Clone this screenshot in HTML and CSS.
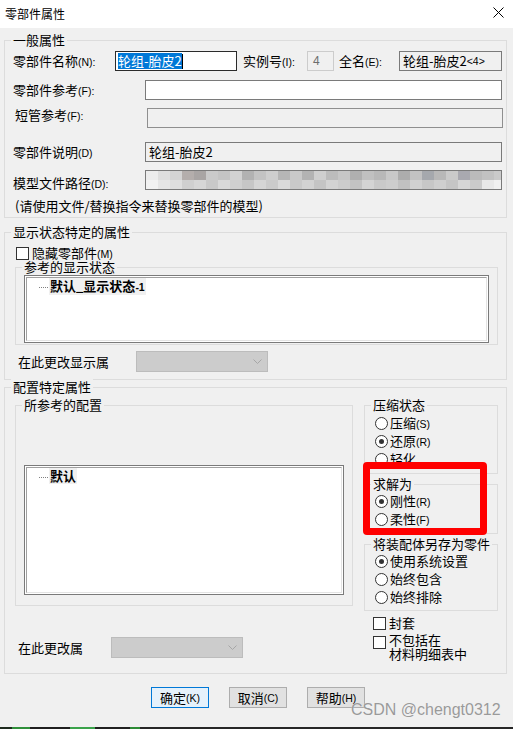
FILE: index.html
```html
<!DOCTYPE html>
<html lang="zh-CN">
<head>
<meta charset="utf-8">
<title>零部件属性</title>
<link rel="stylesheet" href="styles.css">
</head>
<body>
<div class="dialog">
  <div class="titlebar">
    <span class="title">零部件属性</span>
    <svg class="close" width="11" height="11" viewBox="0 0 11 11"><path d="M0.5 0.5L10.5 10.5M10.5 0.5L0.5 10.5" stroke="#000" stroke-width="1"/></svg>
  </div>

  <div class="group g1">
    <div class="legend">一般属性</div>
    <div class="row r1">
      <span class="lbl w-name">零部件名称<span class="k">(N):</span></span>
      <div class="box edit name"><span class="sel">轮组-胎皮2</span><span class="caret"></span></div>
      <span class="lbl w-inst">实例号<span class="k">(I):</span></span>
      <div class="box inst">4</div>
      <span class="lbl w-full">全名<span class="k">(E):</span></span>
      <div class="box ro full">轮组-胎皮2<span class="k">&lt;4&gt;</span></div>
    </div>
    <div class="row r2">
      <span class="lbl w-long">零部件参考<span class="k">(F):</span></span>
      <div class="box edit wide"></div>
    </div>
    <div class="row r3">
      <span class="lbl w-long up">短管参考<span class="k">(F):</span></span>
      <div class="box dis wide"></div>
    </div>
    <div class="row r4">
      <span class="lbl w-long">零部件说明<span class="k">(D)</span></span>
      <div class="box ro wide">轮组-胎皮2</div>
    </div>
    <div class="row r5">
      <span class="lbl w-long down">模型文件路径<span class="k">(D):</span></span>
      <div class="box edit wide mosaic"></div>
    </div>
    <div class="note">(请使用文件/替换指令来替换零部件的模型)</div>
  </div>

  <div class="group g2">
    <div class="legend">显示状态特定的属性</div>
    <div class="check c-hide"><i></i><span>隐藏零部件<span class="k">(M)</span></span></div>
    <div class="group sub-ds">
      <div class="legend">参考的显示状态</div>
      <div class="listbox lb-ds">
        <div class="lb-inner">
          <div class="item"><span class="dots"></span><span class="itxt">默认_显示状态<span class="k b">-1</span></span></div>
        </div>
      </div>
    </div>
    <div class="row combo-row">
      <span class="lbl w-cds">在此更改显示属</span>
      <div class="combo"><svg width="9" height="5" viewBox="0 0 9 5"><path d="M0.5 0.5L4.5 4.5L8.5 0.5" fill="none" stroke="#a6a6a6"/></svg></div>
    </div>
  </div>

  <div class="group g3">
    <div class="legend">配置特定属性</div>
    <div class="cols">
      <div class="col-left">
        <div class="group sub-cfg">
          <div class="legend">所参考的配置</div>
          <div class="listbox lb-cfg">
            <div class="lb-inner">
              <div class="item"><span class="dots"></span><span class="itxt">默认</span></div>
            </div>
          </div>
        </div>
        <div class="row combo-row2">
          <span class="lbl w-ccfg">在此更改属</span>
          <div class="combo"><svg width="9" height="5" viewBox="0 0 9 5"><path d="M0.5 0.5L4.5 4.5L8.5 0.5" fill="none" stroke="#a6a6a6"/></svg></div>
        </div>
      </div>
      <div class="col-right">
        <div class="group rg ga">
          <div class="legend">压缩状态</div>
          <div class="radios first">
            <div class="radio"><i></i><span>压缩<span class="k">(S)</span></span></div>
            <div class="radio on"><i></i><span>还原<span class="k">(R)</span></span></div>
            <div class="radio"><i></i><span>轻化</span></div>
          </div>
        </div>
        <div class="group rg gb">
          <div class="legend">求解为</div>
          <div class="radios">
            <div class="radio on"><i></i><span>刚性<span class="k">(R)</span></span></div>
            <div class="radio"><i></i><span>柔性<span class="k">(F)</span></span></div>
          </div>
        </div>
        <div class="group rg gc">
          <div class="legend">将装配体另存为零件</div>
          <div class="radios">
            <div class="radio on"><i></i><span>使用系统设置</span></div>
            <div class="radio"><i></i><span>始终包含</span></div>
            <div class="radio"><i></i><span>始终排除</span></div>
          </div>
        </div>
        <div class="check c-env"><i></i><span>封套</span></div>
        <div class="check c-bom"><i></i><span>不包括在<br>材料明细表中</span></div>
      </div>
    </div>
  </div>

  <div class="btns">
    <div class="btn default">确定<span class="k">(K)</span></div>
    <div class="btn">取消<span class="k">(C)</span></div>
    <div class="btn">帮助<span class="k">(H)</span></div>
  </div>

  <div class="strip"></div>

  <div class="highlight"></div>
  <div class="watermark">CSDN @chengt0312</div>
</div>
</body>
</html>
```

FILE: styles.css
```css
html, body {
  margin: 0;
  padding: 0;
}
body {
  background: #f0f0f0;
  font-family: "Noto Sans CJK SC", "Noto Sans", sans-serif;
  font-size: 13px;
  color: #000;
}
.dialog {
  position: relative;
  width: 513px;
  height: 729px;
  overflow: hidden;
  background: #f0f0f0;
  display: flex;
  flex-direction: column;
}
.titlebar {
  height: 28px;
  flex: none;
  background: #fff;
  display: flex;
  align-items: center;
  justify-content: space-between;
  padding: 0 9px 0 5px;
  box-sizing: border-box;
}
.title {
  font-size: 12px;
  line-height: 16px;
}
.close {
  display: block;
  margin-top: -3px;
}
.k {
  font-family: "Liberation Sans", Arial, sans-serif;
  font-size: 10.5px;
}
.k.b {
  font-weight: bold;
}

/* group boxes */
.group {
  border: 1px solid #dcdcdc;
  box-sizing: border-box;
  flex: none;
}
.legend {
  display: block;
  width: fit-content;
  margin: -9px 0 0 6px;
  padding: 0 2px;
  line-height: 16px;
  background: #f0f0f0;
  white-space: nowrap;
}
.g1 {
  margin: 12px 0 0 4px;
  width: 503px;
  padding-bottom: 3px;
}
.g2 {
  margin: 14px 0 0 4px;
  width: 503px;
  padding-bottom: 7px;
}
.g3 {
  margin: 7px 0 0 4px;
  width: 503px;
  height: 287px;
}

/* rows */
.row {
  display: flex;
  align-items: center;
  height: 20px;
}
.lbl {
  flex: none;
  line-height: 16px;
  white-space: nowrap;
}
.r1 { margin-top: 3px; }
.r2 { margin-top: 9px; }
.r3 { margin-top: 8px; align-items: flex-start; }
.r4 { margin-top: 14px; }
.r5 { margin-top: 8px; }
.w-name { margin-left: 8px; width: 102px; }
.w-inst { margin-left: 6px; width: 64px; }
.w-full { margin-left: 5px; width: 60px; }
.w-long { margin-left: 8px; width: 132px; }
.r3 .w-long { margin-left: 10px; }
.lbl.up { line-height: 14px; }
.lbl.down { padding-top: 6px; }

.box {
  height: 20px;
  box-sizing: border-box;
  border: 1px solid #7a7a7a;
  display: flex;
  align-items: center;
  padding-left: 3px;
  line-height: 16px;
  white-space: nowrap;
  flex: none;
}
.edit { background: #fff; }
.ro { background: #f0f0f0; }
.dis { background: #f0f0f0; border-color: #8f8f8f; }
.name {
  width: 122px;
  border-color: #2b2b2b;
  padding-left: 2px;
}
.sel {
  background: #0078d7;
  color: #fff;
  line-height: 16px;
}
.caret {
  width: 1px;
  height: 15px;
  background: #000;
}
.inst {
  width: 27px;
  border-color: #cccccc;
  background: #f0f0f0;
  color: #6d6d6d;
  padding-left: 5px;
  font-family: "Liberation Sans", Arial, sans-serif;
  font-size: 12px;
}
.full { width: 103px; }
.wide { width: 357px; }
.r3 .wide { width: 356px; }
.mosaic {
  background-color: #fff;
  background-repeat: no-repeat;
  background-size: 100% 50%, 100% 50%;
  background-position: 0 0, 0 100%;
  background-image:
    linear-gradient(90deg, #ececec 0 12px, #dedede 12px 24px, #d4d4d4 24px 36px, #b4aeac 36px 48px, #a9a5a4 48px 60px, #cacaca 60px 72px, #c4c4c4 72px 84px, #d2d2d2 84px 96px, #b2b2b2 96px 108px, #c3c3c3 108px 120px, #cecece 120px 132px, #b6b6b6 132px 144px, #c9c9c9 144px 156px, #b3b3b3 156px 168px, #cfcfcf 168px 180px, #bcbcbc 180px 192px, #c6c6c6 192px 204px, #afafaf 204px 216px, #c0c0c0 216px 228px, #b8b8b8 228px 240px, #c8c8c8 240px 252px, #adadad 252px 264px, #c2c2c2 264px 276px, #a5a8ad 276px 288px, #b8b8b8 288px 300px, #cacaca 300px 312px, #a9a9b0 312px 324px, #bbbbbb 324px 336px, #c2c2c2 336px 348px, #cacaca 348px 360px),
    linear-gradient(90deg, #f2f2f2 0 12px, #e6e6e6 12px 24px, #dedede 24px 36px, #cfcfcf 36px 48px, #d6d6d6 48px 60px, #c9c9c9 60px 72px, #d9d9d9 72px 84px, #cfcfcf 84px 96px, #c6c6c6 96px 108px, #d5d5d5 108px 120px, #cbcbcb 120px 132px, #dadada 132px 144px, #c9c9c9 144px 156px, #d2d2d2 156px 168px, #c4c4c4 168px 180px, #d3d3d3 180px 192px, #cccccc 192px 204px, #c3c3c3 204px 216px, #d4d4d4 216px 228px, #c9c9c9 228px 240px, #cdcdcd 240px 252px, #c1c1c1 252px 264px, #d1d1d1 264px 276px, #c7c7c7 276px 288px, #cfcfcf 288px 300px, #c5c5c5 300px 312px, #d6d6d6 312px 324px, #cbcbcb 324px 336px, #e8e8e8 336px 348px, #f0f0f0 348px 360px);
}
.note {
  margin: 8px 0 0 10px;
  line-height: 16px;
  white-space: nowrap;
}

/* checkbox */
.check {
  display: flex;
  align-items: center;
  line-height: 16px;
}
.check i {
  display: block;
  flex: none;
  width: 13px;
  height: 13px;
  box-sizing: border-box;
  border: 1px solid #333;
  background: #fff;
  margin-right: 3px;
}
.c-hide {
  margin: 5px 0 0 11px;
  height: 16px;
}

/* sub groups */
.sub-ds {
  margin: 6px 0 0 10px;
  width: 483px;
  padding-bottom: 1px;
}
.listbox {
  box-sizing: border-box;
  border: 1px solid #7a7a7a;
  background: #fff;
  padding: 1px;
}
.lb-inner {
  height: 100%;
  box-sizing: border-box;
  border-top: 1px solid #a0a0a0;
  border-left: 1px solid #a0a0a0;
  border-right: 1px solid #e3e3e3;
  border-bottom: 1px solid #e3e3e3;
}
.lb-ds {
  margin-left: 8px;
  width: 465px;
  height: 68px;
}
.item {
  display: flex;
  align-items: center;
  height: 16px;
}
.dots {
  width: 9px;
  margin-left: 12px;
  border-top: 1px dotted #808080;
  margin-top: 2px;
}
.itxt {
  margin-left: 1px;
  padding: 0 1px;
  background: #f0f0f0;
  font-weight: bold;
  line-height: 16px;
}
.combo-row {
  margin-top: 6px;
  height: 21px;
}
.w-cds {
  margin-left: 13px;
  width: 118px;
}
.combo {
  flex: none;
  width: 132px;
  height: 21px;
  box-sizing: border-box;
  background: #cccccc;
  border: 1px solid #bcbcbc;
  display: flex;
  align-items: center;
  justify-content: flex-end;
  padding-right: 5px;
}
.combo svg { display: block; }

/* config group */
.cols {
  display: flex;
  margin-top: 10px;
}
.col-left {
  margin-left: 10px;
  width: 338px;
  flex: none;
}
.sub-cfg {
  width: 338px;
  padding-bottom: 10px;
}
.lb-cfg {
  margin: 52px 0 0 8px;
  width: 320px;
  height: 130px;
}
.combo-row2 {
  margin-top: 31px;
  height: 21px;
}
.w-ccfg {
  margin-left: 3px;
  width: 93px;
}
.col-right {
  margin-left: 11px;
  width: 135px;
  flex: none;
}
.rg { width: 134px; }
.ga { height: 69px; }
.gb { height: 50px; margin-top: 10px; }
.gc { height: 67px; margin-top: 10px; }
.radios.first { margin-top: 1px; }
.radio {
  display: flex;
  align-items: center;
  height: 18px;
  margin-left: 10px;
  line-height: 16px;
  white-space: nowrap;
}
.radio i {
  flex: none;
  width: 13px;
  height: 13px;
  box-sizing: border-box;
  border: 1px solid #333;
  border-radius: 50%;
  background: #fff;
  margin-right: 2px;
  display: flex;
  align-items: center;
  justify-content: center;
}
.radio.on i::after {
  content: "";
  width: 5px;
  height: 5px;
  border-radius: 50%;
  background: #333;
}
.c-env {
  margin: 4px 0 0 9px;
  height: 16px;
}
.c-bom {
  margin: 2px 0 0 9px;
  align-items: flex-start;
  line-height: 14px;
}
.c-bom i { margin-top: 3px; }

/* buttons */
.btns {
  display: flex;
  gap: 20px;
  margin-top: 13px;
  padding-left: 151px;
  flex: none;
}
.btn {
  width: 58px;
  height: 21px;
  box-sizing: border-box;
  border: 1px solid #adadad;
  background: #e1e1e1;
  display: flex;
  align-items: center;
  justify-content: center;
  line-height: 16px;
}
.btn.default {
  border-color: #0078d7;
  background: #e5f1fb;
}

.strip {
  margin-top: auto;
  height: 2px;
  flex: none;
  background: linear-gradient(90deg, #1e2a1e 0 12px, #2f8f3a 12px 30px, #1f1f1f 30px 70px, #3aa24a 70px 95px, #202020 95px 130px, #2d8a35 130px 140px, #262626 140px 513px);
}

/* overlays */
.highlight {
  position: absolute;
  left: 363px;
  top: 462px;
  width: 124px;
  height: 73px;
  box-sizing: border-box;
  border: 7px solid #ff0000;
  border-radius: 4px;
}
.watermark {
  position: absolute;
  left: 351px;
  top: 701px;
  font-family: "Liberation Sans", Arial, sans-serif;
  font-size: 16px;
  line-height: 18px;
  color: #9a9a9a;
  white-space: nowrap;
  text-shadow: 0 0 1px rgba(255,255,255,0.6);
}
```
